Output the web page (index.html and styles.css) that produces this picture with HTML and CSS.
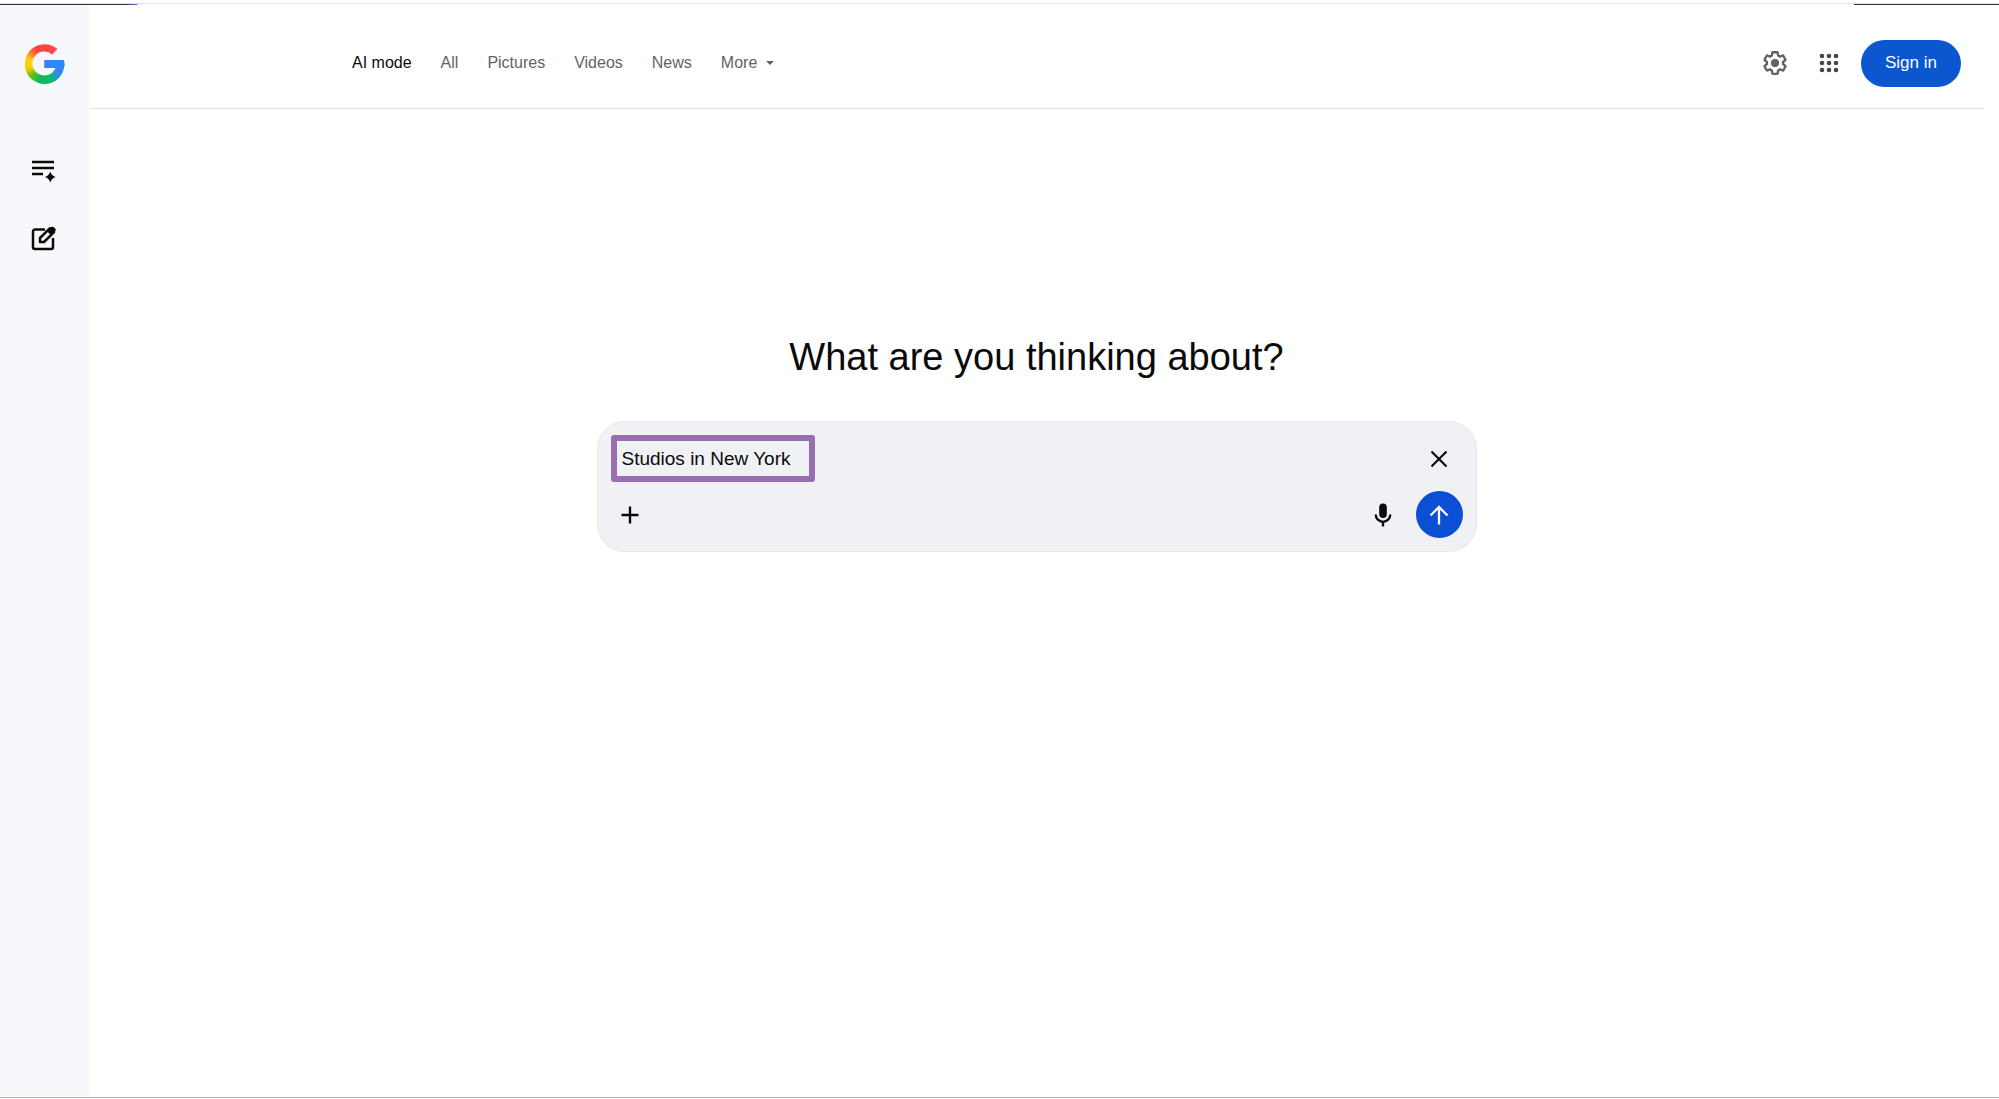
FILE: index.html
```html
<!DOCTYPE html>
<html lang="en">
<head>
<meta charset="utf-8">
<title>AI mode</title>
<link rel="stylesheet" href="styles.css">
</head>

<body>
<div class="topline"></div>
<div class="page">
	<aside class="sidebar">
		<a href="#" class="logo" aria-label="Google"></a>
		<button type="button" class="side-btn" aria-label="History">
			<svg width="26" height="26" viewBox="0 0 26 26"><path d="M1 3h22M1 9h22M1 15h11" fill="none" stroke="currentColor" stroke-width="2.6"/><path d="M19.3 12.400q1.300 4.200 5.500 5.500q-4.200 1.300-5.500 5.500q-1.300-4.200-5.500-5.500q4.200-1.300 5.500-5.500z" fill="currentColor"/></svg>
		</button>
		<button type="button" class="side-btn" aria-label="New search">
			<svg width="26" height="26" viewBox="0 0 26 26"><path d="M14 3.500H4a2 2 0 0 0-2 2V21a2 2 0 0 0 2 2h16a2 2 0 0 0 2-2V12" fill="none" stroke="currentColor" stroke-width="2.500"/><path d="M9 16v-4L19 2.200l4 4L13 16z" fill="none" stroke="currentColor" stroke-width="2.500" stroke-linejoin="round"/><path d="M16 5.200l3.200-3.300a2.700 2.700 0 0 1 4.500 4.200L20.300 9.500z" fill="currentColor"/></svg>
		</button>
	</aside>
	<div class="content">
		<header class="header">
			<nav class="nav">
				<a href="#" class="on">AI mode</a>
				<a href="#">All</a>
				<a href="#">Pictures</a>
				<a href="#">Videos</a>
				<a href="#">News</a>
				<button type="button" class="more">More <span class="caret"></span></button>
			</nav>
			<div class="tools">
				<button type="button" class="tool" aria-label="Settings">
					<svg width="28" height="28" viewBox="0 0 24 24" fill="currentColor"><path d="M13.85 22.25h-3.7c-.74 0-1.36-.54-1.45-1.27l-.27-1.89c-.27-.14-.53-.29-.79-.46l-1.8.72c-.7.26-1.47-.03-1.81-.65L2.2 15.53c-.35-.66-.2-1.44.36-1.88l1.53-1.19c-.01-.15-.02-.3-.02-.46 0-.15.01-.31.02-.46l-1.52-1.19c-.59-.45-.74-1.26-.37-1.88l1.85-3.19c.34-.62 1.11-.9 1.79-.63l1.81.73c.26-.17.52-.32.78-.46l.27-1.91c.09-.7.71-1.25 1.44-1.25h3.7c.74 0 1.36.54 1.45 1.27l.27 1.89c.27.14.53.29.79.46l1.8-.72c.71-.26 1.48.03 1.82.65l1.84 3.18c.36.66.2 1.44-.36 1.88l-1.52 1.19c.01.15.02.3.02.46s-.01.31-.02.46l1.52 1.19c.56.45.72 1.23.37 1.86l-1.86 3.22c-.34.62-1.11.9-1.8.63l-1.8-.72c-.26.17-.52.32-.78.46l-.27 1.91c-.1.68-.72 1.22-1.46 1.22zm-3.23-2h2.76l.37-2.55.53-.22c.44-.18.88-.44 1.34-.78l.45-.34 2.38.96 1.38-2.4-2.03-1.58.07-.56c.03-.26.06-.51.06-.78s-.03-.53-.06-.78l-.07-.56 2.03-1.58-1.39-2.4-2.39.96-.45-.35c-.42-.32-.87-.58-1.33-.77l-.52-.22-.37-2.55h-2.76l-.37 2.55-.53.21c-.44.19-.88.44-1.34.79l-.45.33-2.38-.95-1.39 2.39 2.03 1.58-.07.56a7 7 0 0 0-.06.79c0 .26.02.53.06.78l.07.56-2.03 1.58 1.38 2.4 2.39-.96.45.35c.43.33.86.58 1.33.77l.53.22.38 2.55z"/><circle cx="12" cy="12" r="3.5"/></svg>
				</button>
				<button type="button" class="tool apps" aria-label="Apps">
					<svg width="20" height="20" viewBox="0 0 20 20" fill="currentColor"><circle cx="3" cy="3" r="2.3"/><circle cx="10" cy="3" r="2.3"/><circle cx="17" cy="3" r="2.3"/><circle cx="3" cy="10" r="2.3"/><circle cx="10" cy="10" r="2.3"/><circle cx="17" cy="10" r="2.3"/><circle cx="3" cy="17" r="2.3"/><circle cx="10" cy="17" r="2.3"/><circle cx="17" cy="17" r="2.3"/></svg>
				</button>
				<button type="button" class="signin">Sign in</button>
			</div>
		</header>
		<main class="main">
			<h1>What are you thinking about?</h1>
			<form class="ask">
				<div class="row">
					<input type="text" class="query" aria-label="Ask anything" value="Studios in New York">
					<button type="reset" class="round" aria-label="Clear">
						<svg width="18" height="18" viewBox="0 0 18 18"><path d="M1.5 1.5l15 15M16.5 1.5l-15 15" stroke="currentColor" stroke-width="2.2"/></svg>
					</button>
				</div>
				<div class="row">
					<button type="button" class="small" aria-label="Add">
						<svg width="18" height="18" viewBox="0 0 18 18"><path d="M9 .5v17M.5 9h17" stroke="currentColor" stroke-width="2.4"/></svg>
					</button>
					<div class="actions">
						<button type="button" class="small" aria-label="Voice search">
							<svg width="18" height="24" viewBox="0 0 18 24"><rect x="5.2" y=".5" width="7.6" height="14.5" rx="3.8" fill="currentColor"/><path d="M1.7 11.500a7.300 7.300 0 0 0 14.600 0M9 19v4.500" fill="none" stroke="currentColor" stroke-width="2.300"/></svg>
						</button>
						<button type="submit" class="round send" aria-label="Send">
							<svg width="20" height="20" viewBox="0 0 20 20"><path d="M10 19.5V2M1.5 10.5L10 2l8.5 8.5" fill="none" stroke="currentColor" stroke-width="2.3"/></svg>
						</button>
					</div>
				</div>
			</form>
		</main>
	</div>
</div>
</body>
</html>
```

FILE: styles.css
```css
*{margin:0;padding:0;box-sizing:border-box;}
body{min-height:100vh;display:flex;flex-direction:column;background:#fff;color:#0a0a0a;font-family:"Liberation Sans",Arial,sans-serif;font-size:16px;}
button,input{border:0;background:none;color:inherit;font-family:inherit;font-size:inherit;}
button{cursor:pointer;display:flex;align-items:center;justify-content:center;}
a{color:inherit;text-decoration:none;}
svg{display:block;}

/* window edge */
.topline{height:5px;border-top:3px solid #fff;background:linear-gradient(90deg,#333 125px,#4285f4 137px,transparent 138px) 0 1px/138px 1px no-repeat,linear-gradient(#333,#333) 100% 1px/145px 1px no-repeat,linear-gradient(#e2e2e4,#e2e2e4) 0 0/100% 1px no-repeat;}
.page{flex:1;display:flex;margin-bottom:1px;border-bottom:1px solid #b4b4b4;}

.sidebar{width:89px;flex:none;background:#f7f8fb;display:flex;flex-direction:column;align-items:center;padding:39px 2px 0 0;}
.logo{width:40px;height:40px;margin:0 0 64px 2px;background:linear-gradient(#3186ff,#3186ff) 19px 16px/21px 8px no-repeat,conic-gradient(#ff4641 0deg,#ff4b55 50deg,#3186ff 65deg,#3186ff 120deg,#0ebc5f 165deg,#0ebc5f 200deg,#6cc00f 232deg,#ffcc00 255deg,#ffd314 285deg,#ff4641 325deg);clip-path:path("M33 5A19.9 19.9 0 1 0 39.5 16H20V24H31A12 12 0 1 1 27.7 10.4Z");}
.side-btn{width:48px;height:48px;margin-bottom:19px;}

.content{flex:1;display:flex;flex-direction:column;margin-right:15px;}
.header{height:104px;display:flex;align-items:center;justify-content:space-between;padding:23px 23px 10px 263px;border-bottom:1px solid #dcdfe6;}
.nav{display:flex;align-items:center;gap:29px;color:#5f6368;}
.nav .on{color:#0a0a0a;}
.caret{border:4px solid transparent;border-top-color:#5f6368;border-bottom:0;margin-left:9px;}
.tools{display:flex;align-items:center;color:#5f6368;}
.tool{width:54px;height:48px;}
.apps{color:#444746;margin-right:5px;}
.signin{width:100px;height:47px;border-radius:24px;background:#0b57d0;color:#fff;font-size:17px;}

.main{display:flex;flex-direction:column;align-items:center;padding:224px 20px 40px;}
h1{font-size:38px;line-height:48px;font-weight:normal;margin-bottom:40px;}
.ask{width:100%;max-width:880px;padding:13px;border:1px solid #e6e8ec;border-radius:28px;background:#f0f1f5;display:flex;flex-direction:column;gap:9px;}
.row,.actions{display:flex;align-items:center;justify-content:space-between;}
.query{width:204px;height:47px;padding:0 5px;border:6px solid #986eae;border-radius:3px;font-size:19px;outline:0;}
.round{width:47px;height:47px;border-radius:50%;}
.small{width:38px;height:47px;}
.actions{gap:14px;}
.send{background:#0b50d4;color:#fff;}
```
